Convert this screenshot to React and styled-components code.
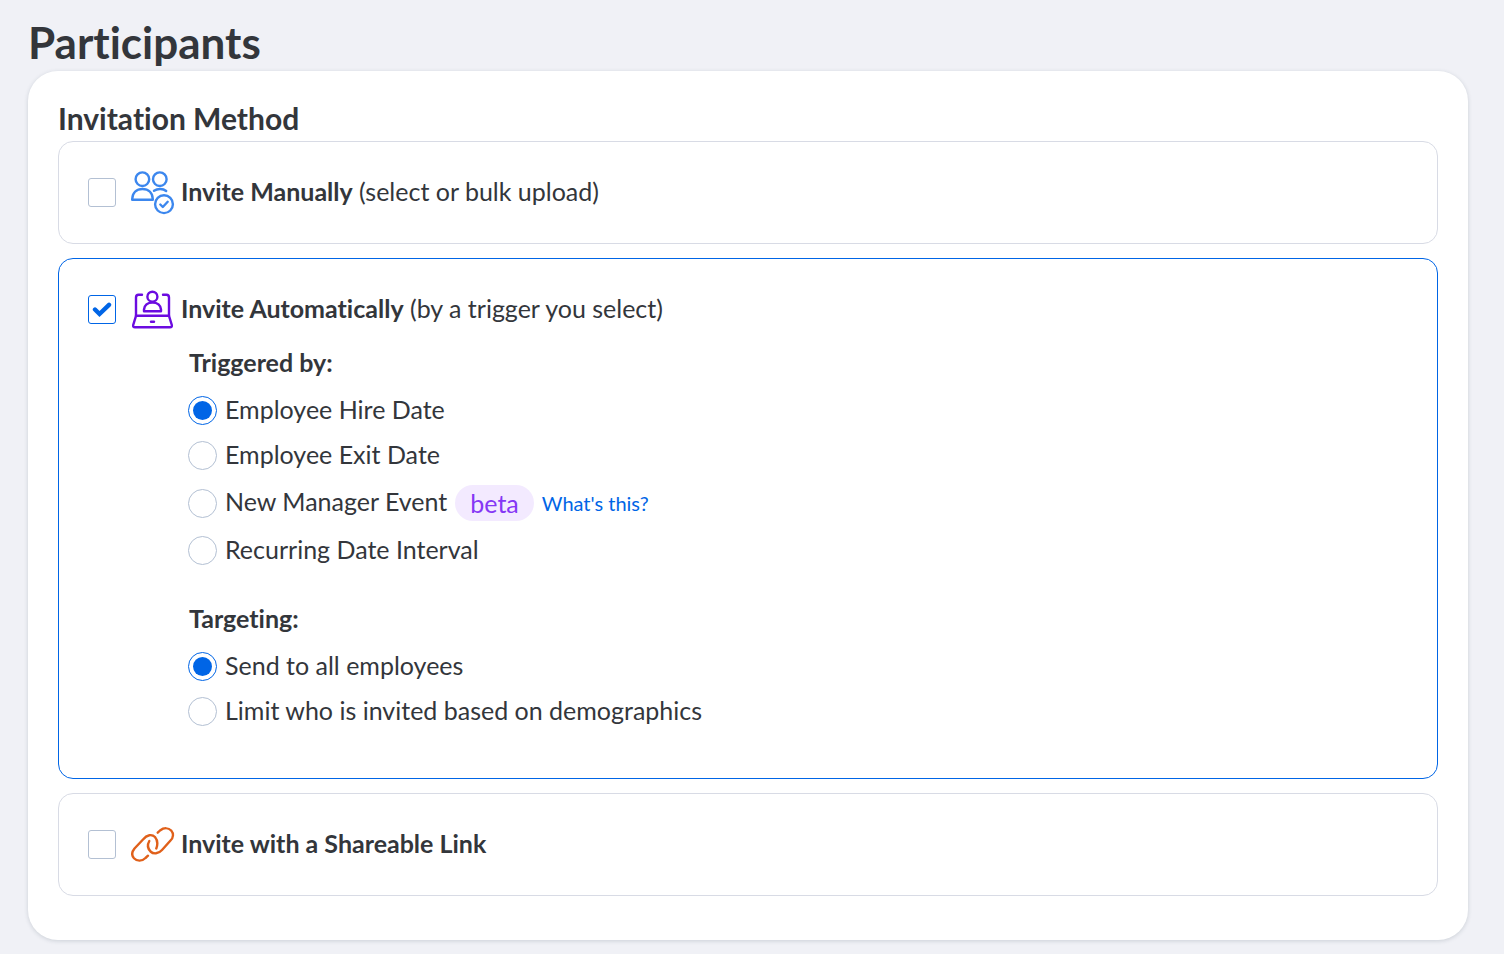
import React, { useState } from "react";
import styled, { createGlobalStyle } from "styled-components";

const GlobalStyle = createGlobalStyle`
  *, *::before, *::after { box-sizing: border-box; }
  body {
    margin: 0;
    background: #f0f1f6;
    color: #33363b;
    font-family: Lato, "Open Sans", sans-serif;
    font-size: 25px;
    line-height: 36px;
    font-variant-ligatures: none;
  }
`;

const Page = styled.main`
  padding: 15px 36px 14px 28px;
`;

const Title = styled.h1`
  margin: 0;
  padding-bottom: 2px;
  font-size: 44px;
  line-height: 54px;
  font-weight: 700;
`;

const Panel = styled.section`
  padding: 30px 30px 44px;
  background: #fff;
  border-radius: 30px;
  box-shadow: 0 1px 4px rgba(40, 60, 80, 0.18);
`;

const PanelTitle = styled.h2`
  margin: 0;
  padding-bottom: 6px;
  font-size: 30px;
  line-height: 34px;
  font-weight: 700;
`;

const Options = styled.div`
  display: flex;
  flex-direction: column;
  gap: 14px;
`;

const OptionCard = styled.div`
  padding: 29px;
  border: 1px solid ${(p) => (p.$active ? "#0065e6" : "#d8dbe5")};
  border-radius: 15px;
`;

const OptionHead = styled.label`
  display: flex;
  align-items: center;
  height: 43px;
`;

const CheckFrame = styled.span`
  display: grid;
  place-items: center;
  margin-right: 15px;

  > * { grid-area: 1 / 1; }
  > svg { pointer-events: none; }
`;

const CheckInput = styled.input`
  appearance: none;
  width: 28px;
  height: 29px;
  margin: 0;
  background: #fff;
  border: 1px solid #b3c0d3;
  border-radius: 3px;

  &:checked { border-color: #0065e6; }
`;

const IconSlot = styled.svg`
  flex: none;
  width: 44px;
  height: 44px;
  margin-right: 6px;
  fill: none;
  stroke: ${(p) => p.$color};
  stroke-width: 2.4;
  stroke-linecap: round;
  stroke-linejoin: round;
`;

const LabelText = styled.span`
  padding-bottom: 4px;
`;

const Settings = styled.div`
  display: flex;
  flex-direction: column;
  gap: 27px;
  padding: 13px 0 15px 100px;
`;

const Group = styled.fieldset`
  min-width: 0;
  margin: 0;
  padding: 0;
  border: 0;
`;

const GroupTitle = styled.legend`
  margin-bottom: 8px;
  padding: 0 0 0 1px;
  font-weight: 700;
`;

const RadioRow = styled.div`
  display: flex;
  align-items: center;
  gap: 8px;
  min-height: ${(p) => (p.$tall ? 50 : 45)}px;
`;

const RadioLabel = styled.label`
  display: flex;
  align-items: center;
  gap: 8px;
`;

const RadioInput = styled.input`
  appearance: none;
  display: grid;
  place-items: center;
  flex: none;
  width: 29px;
  height: 29px;
  margin: 0;
  background: #fff;
  border: 1px solid #b3c0d3;
  border-radius: 50%;

  &:checked { border-color: #0065e6; }
  &:checked::before {
    content: "";
    width: 19px;
    height: 19px;
    border-radius: 50%;
    background: #0065e6;
  }
`;

const Badge = styled.span`
  padding: 0 15px;
  border-radius: 18px;
  background: #f3eaff;
  color: #8537f5;
`;

const HelpLink = styled.a`
  color: #0065e6;
  font-size: 20px;
  text-decoration: none;
`;

function PeopleIcon() {
  return (
    <IconSlot viewBox="0 0 44 44" $color="#3c87ee" aria-hidden="true">
      <circle cx="11.4" cy="8.2" r="6.800" />
      <circle cx="28.8" cy="8.2" r="6.800" />
      <path d="M1.200 28.700V28C1.500 21.800 5.500 18 11.500 18S21.500 21.800 21.800 28V28.700Z" />
      <path d="M23 19.800C26.500 17.400 32 17.400 35.200 20" />
      <circle cx="33" cy="33.200" r="8.900" />
      <path d="M29.300 33.500L31.800 36L36.700 30.800" />
    </IconSlot>
  );
}

function LaptopIcon() {
  return (
    <IconSlot viewBox="0 0 44 44" $color="#6b0be0" aria-hidden="true">
      <circle cx="21.400" cy="8.700" r="5" />
      <path d="M13 23.200V21.500C13.500 17 17 14.600 21.500 14.600S29.500 17 30 21.500V23.200Z" />
      <path d="M11 6.800H7.500Q5 6.800 5 9.500V27.800H38V9.500Q38 6.800 35.500 6.800H32" />
      <path d="M5 27.800L2.200 37Q1.700 39.300 4 39.300H39Q41.300 39.300 40.800 37L38 27.800" />
      <path d="M20 33.700H23" />
    </IconSlot>
  );
}

function ChainIcon() {
  return (
    <IconSlot viewBox="0 0 44 44" $color="#e0601a" aria-hidden="true">
      <path d="M17 32.700L14.500 35C11 38.500 6 38.500 3 35.300C0.500 32.500 0.900 28.800 3.500 25.500L12 16.500C16 11.500 21 11 24 14C26.500 17 27 21 25.300 25.500" />
      <path d="M26.700 9.700L29 7.500C33 4.500 37.500 4.700 40.200 7.500C42.800 10.500 42.500 14.500 39.500 17.500L31 27C27.500 31 22.500 31.300 19.500 28.500C16.700 25.500 16.300 21.500 18.300 18" />
    </IconSlot>
  );
}

function Option({ icon, title, note, checked, onToggle, children }) {
  return (
    <OptionCard $active={checked}>
      <OptionHead>
        <CheckFrame>
          <CheckInput type="checkbox" checked={checked} onChange={onToggle} />
          {checked && (
            <svg width="20" height="16" viewBox="0 0 20 16" fill="none" aria-hidden="true">
              <path
                d="M3 7.500L7.500 12L17 2.800"
                stroke="#0065e6"
                strokeWidth="4.400"
                strokeLinecap="round"
              />
            </svg>
          )}
        </CheckFrame>
        {icon}
        <LabelText>
          <b>{title}</b>
          {note && ` ${note}`}
        </LabelText>
      </OptionHead>
      {children}
    </OptionCard>
  );
}

function Radio({ name, label, defaultChecked, tall, children }) {
  return (
    <RadioRow $tall={tall}>
      <RadioLabel>
        <RadioInput type="radio" name={name} value={label} defaultChecked={defaultChecked} />
        <LabelText>{label}</LabelText>
      </RadioLabel>
      {children}
    </RadioRow>
  );
}

export default function App() {
  const [methods, setMethods] = useState({ manual: false, auto: true, link: false });
  const toggle = (key) => () => setMethods((m) => ({ ...m, [key]: !m[key] }));

  return (
    <Page>
      <GlobalStyle />
      <Title>Participants</Title>
      <Panel>
        <PanelTitle>Invitation Method</PanelTitle>
        <Options>
          <Option
            icon={<PeopleIcon />}
            title="Invite Manually"
            note="(select or bulk upload)"
            checked={methods.manual}
            onToggle={toggle("manual")}
          />
          <Option
            icon={<LaptopIcon />}
            title="Invite Automatically"
            note="(by a trigger you select)"
            checked={methods.auto}
            onToggle={toggle("auto")}
          >
            <Settings>
              <Group>
                <GroupTitle>Triggered by:</GroupTitle>
                <Radio name="trigger" label="Employee Hire Date" defaultChecked />
                <Radio name="trigger" label="Employee Exit Date" />
                <Radio name="trigger" label="New Manager Event" tall>
                  <Badge>beta</Badge>
                  <HelpLink href="#new-manager-event">What's this?</HelpLink>
                </Radio>
                <Radio name="trigger" label="Recurring Date Interval" />
              </Group>
              <Group>
                <GroupTitle>Targeting:</GroupTitle>
                <Radio name="targeting" label="Send to all employees" defaultChecked />
                <Radio name="targeting" label="Limit who is invited based on demographics" />
              </Group>
            </Settings>
          </Option>
          <Option
            icon={<ChainIcon />}
            title="Invite with a Shareable Link"
            checked={methods.link}
            onToggle={toggle("link")}
          />
        </Options>
      </Panel>
    </Page>
  );
}
